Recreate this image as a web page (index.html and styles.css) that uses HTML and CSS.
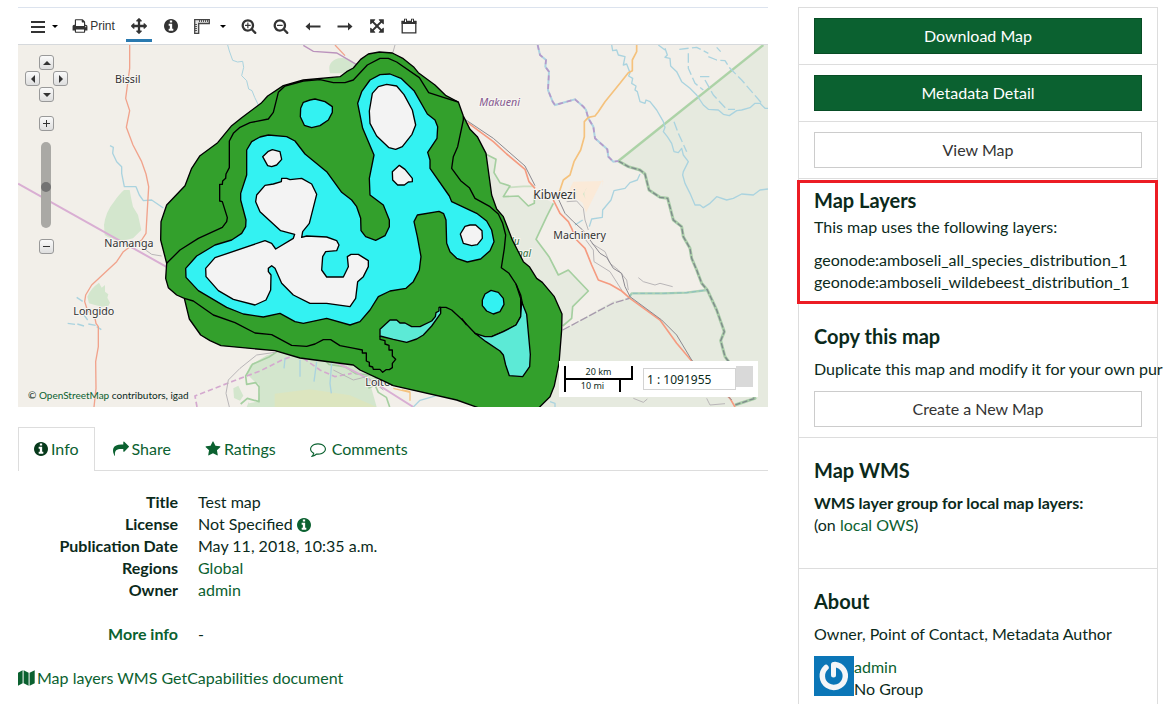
FILE: index.html
```html
<!DOCTYPE html>
<html lang="en">
<head>
<meta charset="utf-8">
<title>Test map</title>
<link rel="stylesheet" href="styles.css">
</head>
<body>
<svg class="sprite" aria-hidden="true">
  <symbol id="i-info" viewBox="128 128 1536 1536"><path d="M1152 1376v-160q0-14-9-23t-23-9h-96v-512q0-14-9-23t-23-9h-320q-14 0-23 9t-9 23v160q0 14 9 23t23 9h96v320h-96q-14 0-23 9t-9 23v160q0 14 9 23t23 9h448q14 0 23-9t9-23zm-128-896v-160q0-14-9-23t-23-9h-192q-14 0-23 9t-9 23v160q0 14 9 23t23 9h192q14 0 23-9t9-23zm640 416q0 209-103 385.500t-279.500 279.500-385.500 103-385.500-103-279.500-279.500-103-385.500 103-385.500 279.500-279.500 385.500-103 385.500 103 279.500 279.500 103 385.500z"/></symbol>
  <symbol id="i-caret" viewBox="0 0 6 3"><path d="M0 0h6L3 3z"/></symbol>
</svg>
<div class="page">
  <main class="main">
    <div class="toolbar">
      <button class="tool tool-menu" aria-label="Menu"><svg width="15" height="13" viewBox="0 0 15 13"><path d="M0 1h14v2H0zM0 6h14v2H0zM0 11h14v2H0z"/></svg><svg width="6" height="3"><use href="#i-caret"/></svg></button>
      <button class="tool tool-print"><svg width="16" height="16" viewBox="64 0 1664 1792"><path d="M448 1536h896v-256h-896v256zm0-640h896v-384h-160q-40 0-68-28t-28-68v-160h-640v640zm1152 64q0-26-19-45t-45-19-45 19-19 45 19 45 45 19 45-19 19-45zm128 0v416q0 13-9.500 22.500t-22.500 9.500h-224v160q0 40-28 68t-68 28h-960q-40 0-68-28t-28-68v-160h-224q-13 0-22.500-9.500t-9.500-22.500v-416q0-79 56.500-135.500t135.500-56.500h64v-544q0-40 28-68t68-28h672q40 0 88 20t76 48l152 152q28 28 48 76t20 88v256h64q79 0 135.500 56.500t56.500 135.500z"/></svg>Print</button>
      <button class="tool tool-active" aria-label="Pan map"><svg width="16" height="16" viewBox="0 0 1792 1792"><path d="M1792 896q0 26-19 45l-256 256q-19 19-45 19t-45-19-19-45v-128h-384v384h128q26 0 45 19t19 45-19 45l-256 256q-19 19-45 19t-45-19l-256-256q-19-19-19-45t19-45 45-19h128v-384h-384v128q0 26-19 45t-45 19-45-19l-256-256q-19-19-19-45t19-45l256-256q19-19 45-19t45 19 19 45v128h384v-384h-128q-26 0-45-19t-19-45 19-45l256-256q19-19 45-19t45 19l256 256q19 19 19 45t-19 45-45 19h-128v384h384v-128q0-26 19-45t45-19 45 19l256 256q19 19 19 45z"/></svg></button>
      <button class="tool" aria-label="Get feature info"><svg width="14" height="14"><use href="#i-info"/></svg></button>
      <button class="tool tool-measure" aria-label="Measure"><svg width="16" height="15" viewBox="0 0 16 15"><path d="M.7.700h14.600v3.800H4.700v9.800h-4z" fill="#e4e4e4" stroke="#444" stroke-width="1.300"/><path d="M5.500 1v2M7.500 1v2M9.500 1v2M11.500 1v2M13.500 1v2M1 5.500h2M1 7.500h2M1 9.500h2M1 11.500h2" stroke="#444" stroke-width=".9"/></svg><svg width="6" height="3"><use href="#i-caret"/></svg></button>
      <button class="tool" aria-label="Zoom in"><svg width="16" height="16" viewBox="0 0 1792 1792"><path d="M1088 800v64q0 13-9.500 22.500t-22.500 9.500h-224v224q0 13-9.500 22.500t-22.500 9.500h-64q-13 0-22.500-9.500t-9.500-22.500v-224h-224q-13 0-22.500-9.500t-9.500-22.500v-64q0-13 9.500-22.500t22.500-9.500h224v-224q0-13 9.500-22.500t22.500-9.500h64q13 0 22.500 9.500t9.500 22.500v224h224q13 0 22.500 9.500t9.500 22.500zm128 32q0-185-131.500-316.500t-316.500-131.500-316.500 131.500-131.500 316.500 131.500 316.500 316.500 131.500 316.500-131.500 131.500-316.500zm512 832q0 53-37.500 90.500t-90.500 37.500q-54 0-90-38l-343-342q-179 124-399 124-143 0-273.500-55.500t-225-150-150-225-55.500-273.500 55.500-273.500 150-225 225-150 273.500-55.500 273.500 55.500 225 150 150 225 55.500 273.500q0 220-124 399l343 343q37 37 37 90z"/></svg></button>
      <button class="tool" aria-label="Zoom out"><svg width="16" height="16" viewBox="0 0 1792 1792"><path d="M1088 800v64q0 13-9.500 22.500t-22.500 9.500h-576q-13 0-22.500-9.500t-9.500-22.500v-64q0-13 9.500-22.500t22.500-9.500h576q13 0 22.500 9.500t9.500 22.500zm128 32q0-185-131.500-316.500t-316.500-131.500-316.500 131.500-131.500 316.500 131.500 316.500 316.500 131.500 316.500-131.500 131.500-316.500zm512 832q0 53-37.500 90.500t-90.500 37.500q-54 0-90-38l-343-342q-179 124-399 124-143 0-273.500-55.500t-225-150-150-225-55.500-273.500 55.500-273.500 150-225 225-150 273.500-55.500 273.500 55.500 225 150 150 225 55.500 273.500q0 220-124 399l343 343q37 37 37 90z"/></svg></button>
      <button class="tool" aria-label="Previous extent"><svg width="16" height="9" viewBox="0 0 16 9"><path d="M5 .5v3h10.500v2H5v3L.5 4.500z"/></svg></button>
      <button class="tool" aria-label="Next extent"><svg width="16" height="9" viewBox="0 0 16 9"><path d="M11 .5v3H.5v2H11v3l4.500-4z"/></svg></button>
      <button class="tool" aria-label="Zoom to full extent"><svg width="16" height="16" viewBox="0 0 1792 1792"><path d="M1411 541l-355 355 355 355 144-144q29-31 70-14 39 17 39 59v448q0 26-19 45t-45 19h-448q-42 0-59-40-17-39 14-69l144-144-355-355-355 355 144 144q31 30 14 69-17 40-59 40h-448q-26 0-45-19t-19-45v-448q0-42 40-59 39-17 69 14l144 144 355-355-355-355-144 144q-19 19-45 19-12 0-24-5-40-17-40-59v-448q0-26 19-45t45-19h448q42 0 59 40 17 39-14 69l-144 144 355 355 355-355-144-144q-31-30-14-69 17-40 59-40h448q26 0 45 19t19 45v448q0 42-39 59-13 5-25 5-26 0-45-19z"/></svg></button>
      <button class="tool" aria-label="Timeline"><svg width="16" height="16" viewBox="0 0 16 16"><path d="M1.200 3.500h13.600v11.300H1.200z" fill="none" stroke="#333" stroke-width="1.300"/><path d="M.6 3h14.800v3H.6zM3 .8h3v4H3zM10 .8h3v4h-3z"/><path d="M4 1.500h1v2.500H4zM11 1.500h1v2.500h-1z" fill="#fff"/></svg></button>
    </div>

    <div class="map">
      <svg class="map-canvas" viewBox="54 135 2250 1086" role="img" aria-label="Amboseli species distribution map">
        <rect x="54" y="135" width="2250" height="1086" fill="#f2efe9"/>
        <!-- protected areas -->
        <g fill="#e6eadf">
          <path d="M1855 483L2290 135H2304V1221H1600V1000L1688 990 1840 902 1885 895 1895 880H1990L2060 878 2122 870 2105 850 2090 810 2070 745 2050 710 2045 680 2015 660 2003 595 1980 592 1947 570 1935 522 1920 510 1885 500z"/>
          <path d="M1458 460l30 18-6 40 18 30 30 10-20 32 45-2 30 30 18-8 2-30 55 30-20 40-32 68 39 52 28 55 30-15 60 63-47 47-3 35-27 23-230-200z"/>
        </g>
        <g fill="#d3e6cd">
          <path d="M312 675q5-40 30-70 18-25 30-35h17q5 30 10 50l15 25 10 45-25 25q-50 15-85-10z"/>
          <path d="M262 890q10-25 35-42l8 15 10-8v20l10 8-3 10 8 15-5 10-20 2-20-5-18-5z"/>
          <path d="M990 220q-10-35 25-45 30-5 50 15v30z"/>
          <path d="M740 1221l30-70-30-30 10-25 50-30 80-20 120 25 90 40 70 40-10 70z"/>
          <path d="M700 1165l15-8 15 30-10 15-18-8z"/>
        </g>
        <path d="M824 1221v-40l106-13 120 18 80 35z" fill="#dce5bf"/>
        <path d="M1110 1150l70 8 140 30 100 33h-290z" fill="#f2efe9"/>
        <path d="M740 1155l35-5 5 25-8 30-25 5z" fill="#f2efe9"/>
        <path d="M1720 545l90-2-2 20 0-25-50 100-10-30-30-20-15-10z" fill="#fbead8"/>
        <path d="M1762 562q-15 15-5 35l-8-15z" fill="#cfe5c8"/>
        <!-- park borders -->
        <g fill="none" stroke="#a5cfa0" stroke-width="5" stroke-linejoin="round">
          <path d="M1855 483L2290 135" stroke-width="7" opacity=".9"/>
          <path d="M1458 463l30 15-6 40 18 30 30 10-20 32 45-2 30 30 18-8 0-25M1660 610l-20 40-32 68 39 52 28 55 30-15 60 63-47 47-3 35-27 23"/>
          <path d="M1530 562l40-3 30 0" opacity=".5"/>
          <path d="M722 1212l20-17 35 10v-45l-10-12-27 5-3-25 20-35 50-22 30-20 50-10 30 10 40 12 30 30 50 8 30 20 50 5 20 15 40 15M1105 1165l20-10 10 22 24 15 10 29"/>
        </g>
        <g fill="none" stroke-linejoin="round">
          <path id="tsavo-edge" d="M1855 483L1885 500 1920 510 1935 522 1947 570 1980 592 2003 595 2020 660 2045 680 2050 710 2070 745 2075 775 2090 810 2105 850 2122 870 2150 930 2173 995 2162 1022 2175 1070 2190 1090 2265 1195 2205 1215" stroke="#a9cda8" stroke-width="9"/>
          <path d="M1885 895L1895 880H1960L1990 880 2060 878 2122 870" stroke="#a9d1b4" stroke-width="7"/>
          <path d="M1885 895L1895 880H1960L1990 880 2060 878 2122 870" stroke="#8cbfc0" stroke-width="3" stroke-dasharray="14 8"/>
          <path d="M1855 483L1885 500 1920 510 1935 522 1947 570 1980 592 2003 595 2020 660 2045 680 2050 710 2070 745 2075 775 2090 810 2105 850 2122 870 2150 930 2173 995 2162 1022 2175 1070 2190 1090 2265 1195 2205 1215" stroke="#7f8a8c" stroke-width="4" stroke-dasharray="16 6"/>
        </g>
        <!-- administrative borders -->
        <g fill="none">
          <path d="M54 551L502 802" stroke="#d9aed3" stroke-width="6"/>
          <path d="M591 1221l-6-33 115-45 80-30 70-35 30-10M910 1075l50 35 45 20 50-10" stroke="#d4a9cf" stroke-width="5" stroke-dasharray="16 9"/>
          <path d="M1000 1083l80 40 60 35 100 63" stroke="#d9aed3" stroke-width="6"/>
          <g transform="translate(1650 120)">
            <path id="county-edge" d="M-37 15L-30 45-12 60-14 80-3 95-6 150 8 185 15 195 75 178 100 200 108 210 115 235 130 260 135 295 172 328 175 350 190 365 205 363" stroke="#aed3e2" stroke-width="6"/>
            <path d="M-37 15L-30 45-12 60-14 80-3 95-6 150 8 185 15 195 75 178 100 200 108 210 115 235 130 260 135 295 172 328 175 350 190 365 205 363" stroke="#b798c9" stroke-width="5" stroke-dasharray="15 11"/>
          </g>
          <path d="M910 136l30 18 70 5 60 35M1390 350l-15-10" stroke="#bb93bd" stroke-width="4"/>
        </g>
        <!-- rivers -->
        <g fill="none" stroke="#aad3df" stroke-width="4" stroke-linejoin="round">
          <path d="M330 437l10 5-2 18 12 25 15 15v20l8 40 35 0 10 25 12 17 25-2 35 24"/>
          <path d="M683 135l5 18 10 28 15 5 15-2 3 18-6 25 15 15 6 25 10 5 8 20 12 25" stroke-width="3"/>
          <g transform="translate(1650 120)">
            <path d="M185 15L188 32 200 30 205 45 225 50 220 75 230 72 240 98 236 108 248 115 245 130 258 138 255 150 262 155 270 185 285 190 288 180 300 185 320 210 340 245 345 262 340 275 352 290 365 310 372 335 385 338 395 325 400 345 415 365 400 395 398 405 405 430 420 460 435 495 450 495 460 503 480 490 500 470 530 480 550 475 575 462 610 465 630 450 654 447"/>
            <path d="M345 25L352 45 345 52 360 55 362 78 380 95 395 125 420 145 440 165 460 195 475 208 505 210 520 223 538 227 560 212 575 210 600 203 615 190 630 190 645 205 654 205"/>
            <path d="M270 402L262 420 240 428 225 445 192 452 183 480 158 510 157 532 125 537 118 560M75 555L98 540"/>
            <path d="M475 50L500 60 525 62 540 85 575 120 605 155 640 195M415 40V85L435 130 460 150M465 120L490 165 530 208 555 208M372 245L385 280 410 335M388 28L440 22 475 40M325 15L345 30M450 110H480M500 22L512 35" stroke-dasharray="28 10"/>
          </g>
          <path d="M230 892l18 12M248 940l15 20M203 970l22 3M232 972l20 6M265 972l22 4M290 980l14 9"/>
          <path d="M855 1075l-3 30M900 1080v50M950 1085l-8 60M995 1090l-5 60 4 30M1240 1221l20-20 70-20 50 12M1650 1205l15 5v11"/>
        </g>
        <!-- rail and minor roads -->
        <g fill="none" stroke="#b9b6b8" stroke-width="3" stroke-linejoin="round">
          <path d="M430 745l25 18 30 5M688 1221L678 1180 685 1140 720 1105 770 1065 825 1057M1185 135l-7 25M1915 833L1930 845 1965 855 1980 850 2018 860"/>
          <path d="M1700 605L1730 603 1750 625 1755 660 1765 690M1775 730L1815 755 1830 790 1855 810 1880 840 1885 870M1750 710L1780 750 1782 785 1830 815 1865 870M1900 1195l30 12 12-10M2120 1195l10 20 45-4"/>
          <path d="M1000 1110l60 30 40-10 50 40"/>
        </g>
        <!-- highways -->
        <g fill="none" stroke-linejoin="round">
          <path d="M389 135V205L377 295 389 332 379 382 399 435 425 485 438 522 446 560 439 680 438 700 425 720 390 740 370 755 350 785 275 855 257 885 254 905 262 930 285 955 288 970 295 980V1040L287 1085 288 1165 282 1221" stroke="#f1a38c" stroke-width="4"/>
          <path d="M1005 135L1035 167" stroke="#f1a38c" stroke-width="4"/>
          <path d="M1403 368L1480 425 1520 462 1575 508 1587 545 1605 565M1660 600L1680 640 1705 665 1715 685 1730 720 1755 745 1775 795 1795 840 1830 853 1865 873 1890 895 1980 960 2030 1030 2075 1083 2190 1195 2205 1221" stroke="#f59b80" stroke-width="5"/>
          <path d="M1395 358L1480 415 1575 498 1605 557M1672 590L1695 640 1720 665 1748 690 1770 720 1800 760 1820 772 1840 805 1865 820 1875 860 1890 890 1985 960 2030 1005 2075 1080 2195 1200" stroke="#8b8990" stroke-width="3"/>
          <path d="M1688 990l150-80 50-15" stroke="#a79aad" stroke-width="4" stroke-dasharray="24 6"/>
          <path transform="translate(1650 120)" d="M260 15V35L247 60V92L235 98 210 130 165 185 145 215 135 228 115 232 103 245V290L92 330 72 365 60 405 40 420 30 450 20 470" stroke="#f5c27d" stroke-width="5"/>
          <path d="M1180 1165l50 12v25M1206 1170l25 5" stroke="#f5c27d" stroke-width="4"/>
        </g>
        <g class="map-label">
          <text x="345" y="250">Bissil</text>
          <text x="313" y="742">Namanga</text>
          <text x="220" y="945">Longido</text>
          <text x="1600" y="597" class="map-label-town">Kibwezi</text>
          <text x="1660" y="717">Machinery</text>
          <text x="1096" y="1158">Loitokitok</text>
          <text x="1438" y="318" class="map-label-county">Makueni</text>
          <text x="1516" y="735" class="map-label-park">ulu</text>
          <text x="1478" y="771" class="map-label-park">National</text>
        </g>
        <!-- distribution layers -->
        <g stroke="#000" stroke-width="4" stroke-linejoin="round">
          <path fill="#33a02c" d="M482 720L483 665 500 615 555 557 575 505 600 467 653 428 695 377 725 353 783 310 803 288 850 257 910 240 1020 230 1040 215 1060 204 1082 178 1105 162 1138 156 1177 159 1210 176 1242 202 1255 218 1305 255 1338 287 1375 306 1390 348 1410 388 1432 410 1458 460 1475 585 1490 627 1510 650 1537 720 1570 785 1588 800 1610 835 1627 847 1663 890 1686 942 1685 990 1677 1090 1663 1157 1650 1190 1615 1225H1440L1370 1200 1180 1157 1155 1145 1080 1110 1060 1095 900 1074 825 1052 663 1037 630 1022 602 1005 568 957 553 895 530 885 505 863 497 835 500 790z"/>
          <path fill="none" d="M500 790L540 750 595 715 667 682 680 665 682 653 667 605 659 603V553H667L668 543 677 535 678 522 688 503V423L700 400 720 382 750 368 805 357 820 337 835 277 855 258 910 243 960 239 1000 248H1035L1060 240 1102 195 1140 175H1165L1190 186 1258 233 1286 278 1330 292 1375 306M1390 348V360L1373 440 1360 470 1355 505 1382 542 1408 563 1425 595 1470 620 1495 642 1508 670 1517 705 1513 745 1504 803 1527 820 1548 852 1562 895V950L1548 975 1510 995 1475 1010H1445L1425 1000 1385 958 1355 930 1338 922H1317"/>
          <path fill="none" d="M553 895L580 903 640 945 705 968 765 999 815 1004 875 1036 920 1039 945 1032 970 1019H992L1020 1037 1063 1045 1087 1050V1059H1099V1083L1108 1087V1098L1118 1101 1120 1108H1140L1148 1117 1158 1109H1168L1177 1103V1090L1187 1078 1177 1068V1050H1167V1036L1155 1032V1022L1140 1018V1008"/>
          <path fill="#33f2f2" d="M805 405L860 410 885 423 915 462 980 515 1025 577 1055 600 1070 620 1082 655 1083 692 1097 710 1127 721 1155 707 1168 680 1168 660 1150 615 1110 585 1108 535 1122 465 1088 385 1073 310 1085 275 1110 240 1140 224 1170 222 1203 235 1242 272 1282 342 1305 360 1313 380 1311 415 1283 457 1290 480V505L1348 588 1355 605 1430 640 1460 663 1475 690 1482 725 1470 752 1442 777 1402 786 1370 775 1350 755 1340 730 1338 660 1331 641 1317 634 1252 645 1242 665 1252 710 1263 770 1258 810 1240 845 1218 865 1170 873 1135 890 1110 930 1080 965 1050 975 980 955 910 970 885 965 840 940 790 951 730 942 680 922 595 872 558 832 557 805 590 768 645 735 695 720 725 700 737 680 738 660 722 600V580L740 525V450L755 425 780 411z"/>
          <path fill="#f3f3f3" d="M845 535H860L870 539 905 535 935 552 950 583 928 670 908 695 905 712 920 708 980 711 1010 722 1017 735 1010 752 977 755 968 770 965 810 980 831H1030L1045 800 1042 770 1053 763H1075L1105 782V800L1090 830 1073 845 1067 895 1050 920 980 910H930L880 885 845 850 825 805 815 797 805 805V815L813 825 812 870 798 900 765 915 700 898 655 872 618 830 617 805 645 773 795 722 815 730 827 747 880 715 884 703 842 692 780 635 767 605 770 585 795 556 820 552 844 545z"/>
          <g fill="#f3f3f3">
            <path d="M1108 333L1117 280 1135 260 1160 253 1190 258 1212 284 1237 330 1247 375 1236 403 1207 440 1187 448 1167 443 1130 408 1110 370z"/>
            <path d="M1177 515L1198 496 1215 508 1237 535V545L1225 546 1213 555H1193L1178 540z"/>
            <path d="M788 470L805 454 817 449 840 455 845 478 830 495 815 500 803 497z"/>
            <path d="M1381 702L1395 679 1410 675H1427L1446 692 1447 715 1432 734 1415 737 1390 730z"/>
          </g>
          <g fill="#33f2f2">
            <path d="M902 325L910 307 930 300 945 297 975 305 997 320V337L985 360 960 377 935 383 913 376 901 350z"/>
            <path d="M1447 900L1455 882 1473 871 1495 877 1510 895 1512 913 1500 935 1480 942 1460 933 1447 917z"/>
          </g>
          <g fill="#5cead6">
            <path d="M1140 988L1170 960H1190L1200 969H1215L1235 980H1260L1295 963 1306 950 1308 938 1317 933 1317 922H1322V940L1295 978 1270 1005 1250 1017 1220 1027 1180 1018 1140 1008z"/>
            <path d="M1425 1000L1455 1010H1475L1510 995 1548 975 1562 950 1565 905 1580 943 1591 1063 1589 1100 1568 1130 1528 1127 1517 1095 1510 1065 1500 1053 1458 1025z"/>
          </g>
          <path fill="none" d="M1548 852L1562 885 1568 915M1385 955L1400 975"/>
        </g>
      </svg>

      <div class="pan-zoom">
        <button class="nav nav-up" aria-label="Pan up"><svg width="8" height="4" viewBox="0 0 8 4"><path d="M0 4h8L4 0z"/></svg></button>
        <button class="nav nav-left" aria-label="Pan left"><svg width="4" height="8" viewBox="0 0 4 8"><path d="M4 0v8L0 4z"/></svg></button>
        <button class="nav nav-right" aria-label="Pan right"><svg width="4" height="8" viewBox="0 0 4 8"><path d="M0 0v8l4-4z"/></svg></button>
        <button class="nav nav-down" aria-label="Pan down"><svg width="8" height="4" viewBox="0 0 8 4"><path d="M0 0h8L4 4z"/></svg></button>
        <button class="nav nav-in" aria-label="Zoom in"><svg width="7" height="7" viewBox="0 0 7 7"><path d="M3 0h1v3h3v1H4v3H3V4H0V3h3z"/></svg></button>
        <input class="zoom-slider" type="range" min="0" max="100" value="53" aria-label="Zoom level">
        <button class="nav nav-out" aria-label="Zoom out"><svg width="7" height="7" viewBox="0 0 7 7"><path d="M0 3h7v1H0z"/></svg></button>
      </div>

      <p class="attribution">© <a href="#osm">OpenStreetMap</a> contributors, igad</p>

      <div class="scale-panel">
        <div class="scale-lines">
          <div class="scale-km">20 km</div>
          <div class="scale-mi">10 mi</div>
        </div>
        <div class="scale-choice">
          <input class="scale-input" type="text" value="1 : 1091955" aria-label="Map scale">
          <button class="scale-trigger" aria-label="Choose scale"></button>
        </div>
      </div>
    </div>

    <nav class="tabs">
      <a class="tab tab-current" href="#info"><svg width="14" height="14"><use href="#i-info"/></svg>Info</a>
      <a class="tab" href="#share"><svg width="16" height="16" viewBox="0 0 1792 1792"><path d="M1792 640q0 26-19 45l-512 512q-19 19-45 19t-45-19-19-45v-256h-224q-98 0-175.500 6t-154 21.500-133 42.500-105.500 69.500-80 101-48.500 138.500-17.500 181q0 55 5 123 0 6 2.500 23.500t2.500 26.500q0 15-8.500 25t-23.500 10q-16 0-28-17-7-9-13-22t-13.500-30-10.500-24q-127-285-127-451 0-199 53-333 162-403 875-403h224v-256q0-26 19-45t45-19 45 19l512 512q19 19 19 45z"/></svg>Share</a>
      <a class="tab" href="#ratings"><svg width="16" height="16" viewBox="64 0 1664 1792"><path d="M1728 647q0 22-26 48l-363 354 86 500q1 7 1 20 0 21-10.500 35.500t-30.500 14.500q-19 0-40-12l-449-236-449 236q-22 12-40 12-21 0-31.500-14.500t-10.500-35.500q0-6 2-20l86-500-364-354q-25-27-25-48 0-37 56-46l502-73 225-455q19-41 49-41t49 41l225 455 502 73q56 9 56 46z"/></svg>Ratings</a>
      <a class="tab tab-comments" href="#comments"><svg width="16" height="16" viewBox="0 0 1792 1792"><path d="M896 384q-204 0-381.500 69.500t-282 187.500-104.500 255q0 112 71.500 213.500t201.500 175.500l87 50-27 96q-24 91-70 172 152-63 275-171l43-38 57 6q69 8 130 8 204 0 381.500-69.500t282-187.500 104.500-255-104.500-255-282-187.500-381.500-69.500zm896 512q0 174-120 321.500t-326 233-450 85.500q-70 0-145-8-198 175-460 242-49 14-114 22h-5q-15 0-27-10.500t-16-27.500v-1q-3-4-.5-12t2-10 4.500-9.500l6-9 7-8.500 8-9q7-8 31-34.500t34.500-38 31-39.500 32.500-51 27-59 26-76q-157-89-247.500-220t-90.500-281q0-174 120-321.500t326-233 450-85.500 450 85.500 326 233 120 321.500z"/></svg>Comments</a>
    </nav>

    <dl class="details">
      <dt>Title</dt><dd>Test map</dd>
      <dt>License</dt><dd>Not Specified <svg width="14" height="14"><use href="#i-info"/></svg></dd>
      <dt>Publication Date</dt><dd>May 11, 2018, 10:35 a.m.</dd>
      <dt>Regions</dt><dd><a href="#global">Global</a></dd>
      <dt>Owner</dt><dd><a href="#admin">admin</a></dd>
      <dt class="more"><a href="#more">More info</a></dt><dd class="more">-</dd>
    </dl>

    <a class="capabilities" href="#wms"><svg width="17" height="16" viewBox="0 0 17 16"><path d="M0 2.800L4.600.3v12.900L0 15.700zM5.600.3l5 2.500v12.900l-5-2.500zM11.600 2.800L16.700.3v12.900l-5.100 2.500z"/></svg>Map layers WMS GetCapabilities document</a>
  </main>

  <aside class="sidebar">
    <section class="block"><button class="btn btn-primary">Download Map</button></section>
    <section class="block"><button class="btn btn-primary">Metadata Detail</button></section>
    <section class="block"><button class="btn">View Map</button></section>
    <section class="block block-layers">
      <h4>Map Layers</h4>
      <p>This map uses the following layers:</p>
      <ul>
        <li>geonode:amboseli_all_species_distribution_1</li>
        <li>geonode:amboseli_wildebeest_distribution_1</li>
      </ul>
    </section>
    <section class="block">
      <h4 class="heading">Copy this map</h4>
      <p class="one-line">Duplicate this map and modify it for your own pur</p>
      <button class="btn">Create a New Map</button>
    </section>
    <section class="block block-wms">
      <h4 class="heading">Map WMS</h4>
      <p><strong>WMS layer group for local map layers:</strong><br>(on <a href="#ows">local OWS</a>)</p>
    </section>
    <section class="block block-about">
      <h4 class="heading">About</h4>
      <p>Owner, Point of Contact, Metadata Author</p>
      <div class="owner">
        <svg width="40" height="40" viewBox="0 0 40 40" role="img" aria-label="admin avatar"><path fill="#0b76b7" d="M0 0h40v40H0z"/><path d="M12 11.500A11.500 11.500 0 1 0 21 8.500" fill="none" stroke="#f4f6f8" stroke-width="5.500" stroke-linecap="round"/><path d="M19.500 8.500v10.500" stroke="#f4f6f8" stroke-width="5" stroke-linecap="round"/></svg>
        <div><a href="#admin">admin</a><br>No Group</div>
      </div>
    </section>
  </aside>
</div>
</body>
</html>
```
FILE: styles.css
```css
* { box-sizing: border-box; }
body { margin: 0; background: #fff; color: #0b2a1b; font: 16px/22px Lato, sans-serif; }
a { color: #0b6130; text-decoration: none; }
h4, p, ul, dl, dd { margin: 0; padding: 0; }
button { font: inherit; color: inherit; background: none; border: 0; padding: 0; cursor: pointer; }
svg { fill: currentColor; flex: none; }
.sprite { position: absolute; width: 0; height: 0; }

.page { display: grid; grid-template-columns: minmax(0, 25fr) minmax(0, 12fr); gap: 30px; min-height: 100vh; padding: 7px 9px 0 18px; }

/* toolbar */
.toolbar { display: flex; height: 38px; padding-left: 6px; border-top: 1px solid #dce3ee; border-bottom: 1px solid #d6d9dc; color: #333; }
.tool { display: flex; align-items: center; justify-content: center; width: 32px; color: #333; }
.tool-menu { width: 40px; gap: 6px; }
.tool-print { width: 59px; gap: 2px; font: 12px/16px "Liberation Sans", Arial, sans-serif; }
.tool-measure { width: 46px; gap: 10px; }
.tool-menu svg + svg, .tool-measure svg + svg { color: #000; }
.tool-active { position: relative; }
.tool-active::after { content: ""; position: absolute; left: 3px; right: 3px; bottom: 2px; height: 3px; background: #2a7ab0; }

/* map */
.map { position: relative; overflow: hidden; }
.map-canvas { display: block; width: 100%; }
.map-label { font: 32px "Noto Sans", sans-serif; fill: #333; stroke: #f7f5f1; stroke-width: 6px; paint-order: stroke; }
.map-label-town { font-size: 36px; }
.map-label-county { font-style: italic; fill: #85588f; }
.map-label-park { font-size: 30px; font-style: italic; fill: #2f6f3a; }

.nav { position: absolute; display: flex; align-items: center; justify-content: center; width: 15px; height: 15px; border: 1px solid #999; border-radius: 3px; background: linear-gradient(#fafafa, #dedede); color: #333; }
.nav-up { left: 21px; top: 10px; }
.nav-left { left: 7px; top: 26px; }
.nav-right { left: 35px; top: 26px; }
.nav-down { left: 21px; top: 42px; }
.nav-in { left: 21px; top: 71px; }
.nav-out { left: 21px; top: 194px; }
.zoom-slider { position: absolute; left: 23px; top: 97px; width: 10px; height: 86px; margin: 0; appearance: none; writing-mode: vertical-lr; border-radius: 5px; background: #aaa9a5; }
.zoom-slider::-webkit-slider-thumb { appearance: none; width: 10px; height: 10px; border-radius: 50%; background: #737373; }

.attribution { position: absolute; left: 10px; bottom: 5px; font-size: 10px; line-height: 14px; }

.scale-panel { position: absolute; right: 10px; bottom: 10px; display: flex; gap: 10px; padding: 5px; background: #fff; }
.scale-lines { width: 69px; font: 9px/12px "Noto Sans", sans-serif; color: #0b2a1b; text-align: center; }
.scale-km { height: 14px; border: 2px solid #000; border-top: 0; }
.scale-mi { width: 57px; height: 12px; border: solid #000; border-width: 0 2px; }
.scale-choice { display: flex; align-items: flex-start; }
.scale-input { width: 93px; height: 22px; margin-top: 2px; padding: 0 3px; border: 1px solid #d3d3d3; background: #fff; color: #0b2a1b; font: 12px/18px "Noto Sans", sans-serif; }
.scale-trigger { width: 17px; height: 21px; background: #d9d9d9; }

/* tabs */
.tabs { display: flex; margin-top: 20px; border-bottom: 1px solid #ddd; }
.tab { display: flex; align-items: center; gap: 3px; padding: 10px 15px; border: solid transparent; border-width: 1px 1px 0; margin-right: 2px; }
.tab-comments { gap: 6px; }
.tab-current { margin-bottom: -1px; padding-bottom: 11px; border-color: #ddd; background: #fff; }
.tab-current svg { color: #073a1c; }

.details { display: grid; grid-template-columns: 160px 1fr; column-gap: 20px; margin: 20px 0 22px; }
.details dt { font-weight: 700; text-align: right; }
.details dd svg { color: #0b6130; vertical-align: -2px; }
.details .more { margin-top: 22px; }
.capabilities { display: inline-flex; align-items: center; gap: 2px; }

/* sidebar */
.sidebar { border: solid #ddd; border-width: 1px 1px 0; }
.block { padding: 10px 15px; border-bottom: 1px solid #ddd; }
.btn { display: block; width: 100%; height: 36px; border: 1px solid #ccc; color: #333; text-align: center; background: #fff; }
.btn-primary { border-color: #084d26; background: #0b6130; color: #fff; }
h4 { font-size: 20px; line-height: 22px; font-weight: 700; }
.heading { margin: 11px 0; }
.block-layers { position: relative; }
.block-layers::after { content: ""; position: absolute; inset: 1px -1px -1px -2px; border: 3px solid #ec1c24; pointer-events: none; }
.block-layers p { margin: 5px 0 11px; }
.block-layers ul { list-style: none; }
.one-line { margin-bottom: 11px; white-space: nowrap; }
.block-wms { padding-bottom: 32px; }
.block-about { padding-bottom: 0; border-bottom: 0; }
.owner { display: flex; margin-top: 11px; }
```
